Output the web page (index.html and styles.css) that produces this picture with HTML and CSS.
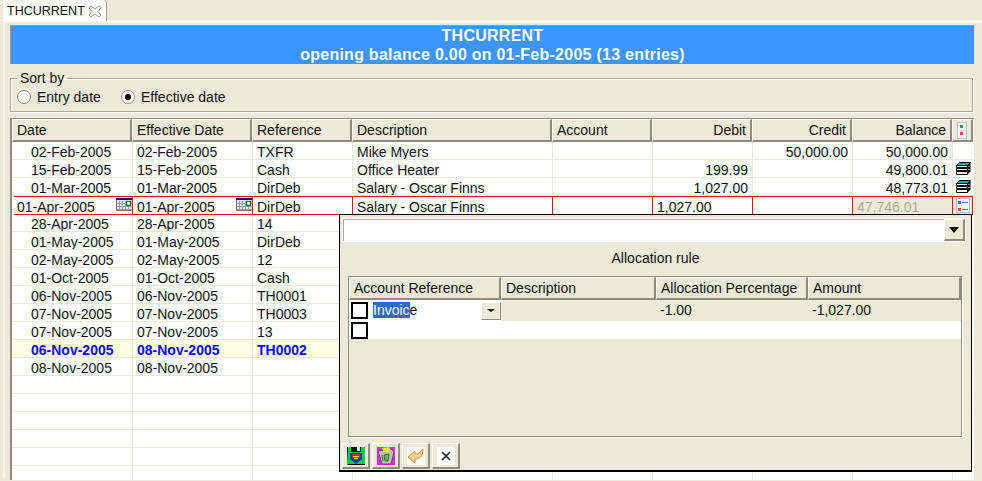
FILE: index.html
```html
<!DOCTYPE html>
<html lang="en">
<head>
<meta charset="utf-8">
<title>THCURRENT</title>
<link rel="stylesheet" href="styles.css">
</head>
<body>
<div class="tabbar">
  <div class="tab">THCURRENT
    <svg class="tab-x" width="13" height="13" viewBox="0 0 13 13"><path d="M2 1l4 3 4-3 2 2-3 3.500 3 3.500-2 2-4-3-4 3-2-2 3-3.500-3-3.500z" fill="#fff" stroke="#9a9a90"/></svg>
  </div>
</div>
<main class="view">
  <header class="banner">
    <div>THCURRENT</div>
    <div>opening balance 0.00 on 01-Feb-2005 (13 entries)</div>
  </header>
  <fieldset class="sort">
    <legend>Sort by</legend>
    <span class="radio"></span><span class="radio-label first">Entry date</span>
    <span class="radio on"></span><span class="radio-label">Effective date</span>
  </fieldset>
  <section class="table">
    <div class="row head">
      <div class="c">Date</div><div class="c">Effective Date</div><div class="c">Reference</div><div class="c">Description</div><div class="c">Account</div><div class="c r">Debit</div><div class="c r">Credit</div><div class="c r">Balance</div>
      <div class="c ico"><svg width="10" height="17" viewBox="0 0 10 17"><rect x=".5" y=".5" width="9" height="16" fill="#f4f6fa" stroke="#b8c4d4"/><rect x="3" y="3" width="3" height="3" fill="#1a9a50"/><rect x="3" y="10" width="3" height="3" fill="#e84848"/></svg></div>
    </div>
    <div class="row"><div class="c d">02-Feb-2005</div><div class="c">02-Feb-2005</div><div class="c">TXFR</div><div class="c">Mike Myers</div><div class="c"></div><div class="c r"></div><div class="c r">50,000.00</div><div class="c r">50,000.00</div><div class="c ico"></div></div>
    <div class="row"><div class="c d">15-Feb-2005</div><div class="c">15-Feb-2005</div><div class="c">Cash</div><div class="c">Office Heater</div><div class="c"></div><div class="c r">199.99</div><div class="c r"></div><div class="c r">49,800.01</div>
      <div class="c ico"><svg width="16" height="13" viewBox="0 0 16 13"><path d="M4.500.5h11l-3 3h-11z" fill="#19a5a5" stroke="#000"/><path d="M1.500 3.500h11v2h-11zM1.500 6.500h11v2h-11zM1.500 9.500h11v3h-11z" fill="#fff" stroke="#000"/><path d="M12.500 3.500l3-3v9l-3 3z" fill="#000"/><path d="M13.500 5l1-1M13.500 8l1-1" stroke="#fff"/></svg></div></div>
    <div class="row"><div class="c d">01-Mar-2005</div><div class="c">01-Mar-2005</div><div class="c">DirDeb</div><div class="c">Salary - Oscar Finns</div><div class="c"></div><div class="c r">1,027.00</div><div class="c r"></div><div class="c r">48,773.01</div>
      <div class="c ico"><svg width="16" height="13" viewBox="0 0 16 13"><path d="M4.500.5h11l-3 3h-11z" fill="#19a5a5" stroke="#000"/><path d="M1.500 3.500h11v2h-11zM1.500 6.500h11v2h-11zM1.500 9.500h11v3h-11z" fill="#fff" stroke="#000"/><path d="M12.500 3.500l3-3v9l-3 3z" fill="#000"/><path d="M13.500 5l1-1M13.500 8l1-1" stroke="#fff"/></svg></div></div>
    <div class="row edit">
      <div class="c e1">01-Apr-2005<svg class="cal" width="16" height="13" viewBox="0 0 16 13"><rect width="16" height="13" fill="#e4e4e8"/><path d="M0 5.500h16M0 8.500h16M0 11.500h16M3.500 3v10M6.500 3v10M9.500 3v10M12.500 3v10" stroke="#9a9aa4"/><path d="M.5 .5v12h15" fill="none" stroke="#77777f"/><rect width="16" height="2" fill="#14147e"/><rect x="10.500" y="3.500" width="4" height="4" fill="#fff" stroke="#a00000"/></svg></div>
      <div class="c e2">01-Apr-2005<svg class="cal" width="16" height="13" viewBox="0 0 16 13"><rect width="16" height="13" fill="#e4e4e8"/><path d="M0 5.500h16M0 8.500h16M0 11.500h16M3.500 3v10M6.500 3v10M9.500 3v10M12.500 3v10" stroke="#9a9aa4"/><path d="M.5 .5v12h15" fill="none" stroke="#77777f"/><rect width="16" height="2" fill="#14147e"/><rect x="10.500" y="3.500" width="4" height="4" fill="#fff" stroke="#a00000"/></svg></div>
      <div class="c">DirDeb</div><div class="c">Salary - Oscar Finns</div><div class="c"></div><div class="c">1,027.00</div><div class="c"></div><div class="c off">47,746.01</div>
      <div class="c ico off"><svg width="14" height="15" viewBox="0 0 14 15"><rect x=".5" y=".5" width="13" height="14" fill="#f4f6fa" stroke="#a8bcd4"/><rect x="2" y="3" width="3" height="3" fill="#1a9a50"/><rect x="2" y="10" width="3" height="3" fill="#e84848"/><path d="M6 4.500h6M6 11.500h6" stroke="#4a7eb5"/></svg></div>
    </div>
    <div class="row"><div class="c d">28-Apr-2005</div><div class="c">28-Apr-2005</div><div class="c">14</div><div class="c"></div><div class="c"></div><div class="c"></div><div class="c"></div><div class="c"></div><div class="c"></div></div>
    <div class="row"><div class="c d">01-May-2005</div><div class="c">01-May-2005</div><div class="c">DirDeb</div><div class="c"></div><div class="c"></div><div class="c"></div><div class="c"></div><div class="c"></div><div class="c"></div></div>
    <div class="row"><div class="c d">02-May-2005</div><div class="c">02-May-2005</div><div class="c">12</div><div class="c"></div><div class="c"></div><div class="c"></div><div class="c"></div><div class="c"></div><div class="c"></div></div>
    <div class="row"><div class="c d">01-Oct-2005</div><div class="c">01-Oct-2005</div><div class="c">Cash</div><div class="c"></div><div class="c"></div><div class="c"></div><div class="c"></div><div class="c"></div><div class="c"></div></div>
    <div class="row"><div class="c d">06-Nov-2005</div><div class="c">06-Nov-2005</div><div class="c">TH0001</div><div class="c"></div><div class="c"></div><div class="c"></div><div class="c"></div><div class="c"></div><div class="c"></div></div>
    <div class="row"><div class="c d">07-Nov-2005</div><div class="c">07-Nov-2005</div><div class="c">TH0003</div><div class="c"></div><div class="c"></div><div class="c"></div><div class="c"></div><div class="c"></div><div class="c"></div></div>
    <div class="row"><div class="c d">07-Nov-2005</div><div class="c">07-Nov-2005</div><div class="c">13</div><div class="c"></div><div class="c"></div><div class="c"></div><div class="c"></div><div class="c"></div><div class="c"></div></div>
    <div class="row cur"><div class="c d">06-Nov-2005</div><div class="c">08-Nov-2005</div><div class="c">TH0002</div><div class="c"></div><div class="c"></div><div class="c"></div><div class="c"></div><div class="c"></div><div class="c"></div></div>
    <div class="row"><div class="c d">08-Nov-2005</div><div class="c">08-Nov-2005</div><div class="c"></div><div class="c"></div><div class="c"></div><div class="c"></div><div class="c"></div><div class="c"></div><div class="c"></div></div>
    <div class="row"><div class="c"></div><div class="c"></div><div class="c"></div><div class="c"></div><div class="c"></div><div class="c"></div><div class="c"></div><div class="c"></div><div class="c"></div></div>
    <div class="row"><div class="c"></div><div class="c"></div><div class="c"></div><div class="c"></div><div class="c"></div><div class="c"></div><div class="c"></div><div class="c"></div><div class="c"></div></div>
    <div class="row"><div class="c"></div><div class="c"></div><div class="c"></div><div class="c"></div><div class="c"></div><div class="c"></div><div class="c"></div><div class="c"></div><div class="c"></div></div>
    <div class="row"><div class="c"></div><div class="c"></div><div class="c"></div><div class="c"></div><div class="c"></div><div class="c"></div><div class="c"></div><div class="c"></div><div class="c"></div></div>
    <div class="row"><div class="c"></div><div class="c"></div><div class="c"></div><div class="c"></div><div class="c"></div><div class="c"></div><div class="c"></div><div class="c"></div><div class="c"></div></div>
    <div class="row"><div class="c"></div><div class="c"></div><div class="c"></div><div class="c"></div><div class="c"></div><div class="c"></div><div class="c"></div><div class="c"></div><div class="c"></div></div>

    <div class="popup">
      <div class="combo"><button class="drop big"><span class="tri"></span></button></div>
      <div class="rule">Allocation rule</div>
      <div class="inner">
        <div class="irow ihead"><div>Account Reference</div><div>Description</div><div>Allocation Percentage</div><div>Amount</div></div>
        <div class="irow i1">
          <div class="refcell"><span class="check"></span><span class="inv"><span class="sel">Invoic</span>e</span><button class="drop"><span class="tri small"></span></button></div>
          <div></div><div>-1.00</div><div>-1,027.00</div>
        </div>
        <div class="irow i2"><div class="refcell"><span class="check"></span></div><div></div><div></div><div></div></div>
      </div>
      <div class="tools">
        <button class="tool"><svg width="18" height="18" viewBox="0 0 18 18"><rect width="18" height="18" fill="#00d040"/><rect x="4" y="0" width="10" height="5" fill="#111"/><rect x="10" y="0" width="3" height="4" fill="#ddd"/><path d="M3 6h12v6l-6 5-6-5z" fill="#1030e0"/><path d="M5 7h8v3l-4 4-4-4z" fill="#e82020"/><path d="M6 9h6v1H6zM7 11h4v1H7z" fill="#ffd820"/><path d="M0 0h1v18h17v-1H1z" fill="#000"/></svg></button>
        <button class="tool"><svg width="18" height="18" viewBox="0 0 18 18"><rect width="18" height="18" fill="#ff20e0"/><path d="M1 4l13-2 3 3-3 12H5z" fill="#c0c0b0" stroke="#555"/><path d="M5 1l7-1 2 4-7 1z" fill="#f8e820"/><path d="M7 8l5-1-1 7-3 0zM5 8l1 6" fill="#70b070" stroke="#2a6a2a"/></svg></button>
        <button class="tool white"><svg width="18" height="18" viewBox="0 0 18 18"><rect width="18" height="18" fill="#fff"/><path d="M1 10l7-6v3c4 0 5-2 8-5 0 6-2 10-8 10v4z" fill="#f4d090" stroke="#d89030"/></svg></button>
        <button class="tool white"><svg width="18" height="18" viewBox="0 0 18 18"><rect width="18" height="18" fill="#fff"/><path d="M5 5l8 8M13 5l-8 8" stroke="#222" stroke-width="1.700"/></svg></button>
      </div>
    </div>
  </section>
</main>
</body>
</html>
```
FILE: styles.css
```css
* { box-sizing: border-box; }
html, body { margin: 0; height: 481px; overflow: hidden; }
body {
  background: #ece9d8;
  font: 14px/18px "Liberation Sans", Arial, sans-serif;
  color: #111;
}
.tabbar { height: 21px; padding-left: 3px; border-bottom: 1px solid #f7f5ec; }
.tab {
  width: 104px; height: 21px;
  background: #fff;
  border-right: 1px solid #9d9a8b;
  border-top-right-radius: 4px;
  padding: 1px 0 0 4px;
  display: flex; align-items: center; gap: 4px;
  font-size: 12.500px; white-space: nowrap;
}
.tab-x { flex: none; }
.view {
  margin-left: 3px;
  border-left: 2px solid #f7f5ec;
  border-top: 2px solid #f7f5ec;
  padding: 2px 0 0 5px;
  height: 458px;
}
.banner {
  width: 964px; height: 39px;
  background: #3d95ff;
  border-top: 1px solid #9d9a8b;
  border-left: 1px solid #9d9a8b;
  color: #fff;
  font: bold 16px/19px "Liberation Sans", Arial, sans-serif;
  letter-spacing: .25px;
  text-align: center;
}
.sort {
  width: 963px; height: 42px;
  margin: 6px 0 0; padding: 0 0 4px 6px;
  border: 1px solid #aca899;
  box-shadow: inset 1px 1px 0 #fff, 1px 1px 0 #fff;
  display: flex; align-items: center;
}
.sort legend { padding: 0 3px; line-height: 16px; }
.radio {
  width: 14px; height: 14px; border-radius: 50%;
  background: #fff;
  border: 1px solid #8f8c7e;
  flex: none;
  display: flex; align-items: center; justify-content: center;
}
.radio.on::after { content: ""; width: 6px; height: 6px; border-radius: 50%; background: #000; }
.radio-label { margin-left: 6px; }
.radio-label.first { width: 84px; }
.table {
  position: relative;
  width: 964px; height: 362px;
  margin-top: 6px;
  background: #fff;
  border-left: 2px solid #8f8c7e;
  border-top: 1px solid #8f8c7e;
}
.row {
  display: grid;
  grid-template-columns: 120px 120px 100px 200px 100px 100px 100px 100px 21px;
  height: 18px;
}
.row .c {
  border-bottom: 1px solid #ece9d8;
  border-left: 1px solid #ece9d8;
  padding: 1px 4px 0 4px;
  white-space: nowrap;
  overflow: hidden;
  line-height: 18px;
}
.row .c:first-child { border-left: 0; }
.row .c.d { padding-left: 19px; }
.row .r { text-align: right; }
.row .ico { padding: 0; display: flex; align-items: center; justify-content: center; }
.row.head { height: 23px; }
.row.head .c {
  background: #ece9d8;
  border-top: 1px solid #fff;
  border-left: 1px solid #fff;
  border-right: 2px solid #8f8c7e;
  border-bottom: 2px solid #8f8c7e;
  line-height: 19px;
}
.row.edit { position: relative; z-index: 1; height: 19px; margin-bottom: -1px; margin-left: 2px; grid-template-columns: 118px 120px 100px 200px 100px 100px 100px 100px 21px; }
.row.edit .c {
  border: 1px solid #f00;
  border-width: 1px 0 1px 1px;
  padding: 1px 0 0 4px;
  line-height: 18px;
  position: relative;
}
.row.edit .c:first-child { border-left: 0; padding-left: 3px; }
.row.edit .c:last-child { border-right: 1px solid #f00; padding: 0; }
.row.edit .off { background: #ece9d8; color: #aca899; }
.cal { position: absolute; right: 0; top: 1px; }
.row.cur .c { background: #ffffe6; color: #00f; font-weight: bold; }
.popup {
  position: absolute; left: 327px; top: 95px;
  width: 633px; height: 258px;
  background: #ece9d8;
  border: 1px solid #000;
  border-bottom-width: 2px;
  z-index: 2;
  padding: 3px 2px 0;
  display: flex; flex-direction: column;
}
.combo {
  height: 24px; width: 624px;
  background: #fff;
  border: 1px solid #fff;
  box-shadow: inset 1px 1px 0 #aca899;
  display: flex; justify-content: flex-end;
}
.drop {
  width: 20px; height: 18px; padding: 0;
  background: #ece9d8;
  border: 1px solid #fff;
  border-right-color: #8f8c7e; border-bottom-color: #8f8c7e;
  display: flex; align-items: center; justify-content: center;
}
.drop.big { width: 21px; height: 22px; border-right-width: 2px; border-bottom-width: 2px; }
.tri { border: 5px solid transparent; border-top: 6px solid #000; border-bottom: 0; }
.tri.small { border-width: 3px 4px 0; border-top-color: #000; }
.rule { height: 34px; text-align: center; line-height: 33px; }
.inner {
  margin-left: 6px;
  width: 614px; height: 161px;
  border: 1px solid #8f8c7e;
  box-shadow: 1px 1px 0 #fff;
}
.irow { display: grid; grid-template-columns: 152px 155px 152px 153px; }
.ihead { height: 22px; }
.ihead div {
  border: 1px solid #fff;
  border-right: 2px solid #8f8c7e;
  border-bottom: 2px solid #8f8c7e;
  padding: 1px 0 0 4px;
  line-height: 19px;
}
.i1 { height: 20px; margin-top: 1px; line-height: 21px; }
.i1 > div:nth-child(n+3) { padding-left: 4px; }
.i2 { height: 19px; background: #fff; border-top: 1px solid #ece9d8; }
.refcell { display: flex; align-items: center; background: #fff; padding-left: 2px; position: relative; }
.check { width: 17px; height: 17px; border: 2px solid #000; background: #fff; flex: none; }
.inv { margin-left: 5px; flex: 1; }
.sel { background: #316ac5; color: #fff; display: inline-block; line-height: 16px; }
.tools { display: flex; gap: 2px; margin-top: 6px; }
.tool {
  width: 28px; height: 26px; padding: 0;
  background: #ece9d8;
  border: 1px solid #fff;
  border-right: 2px solid #8f8c7e;
  border-bottom: 2px solid #8f8c7e;
  display: flex; align-items: center; justify-content: center;
}
```
